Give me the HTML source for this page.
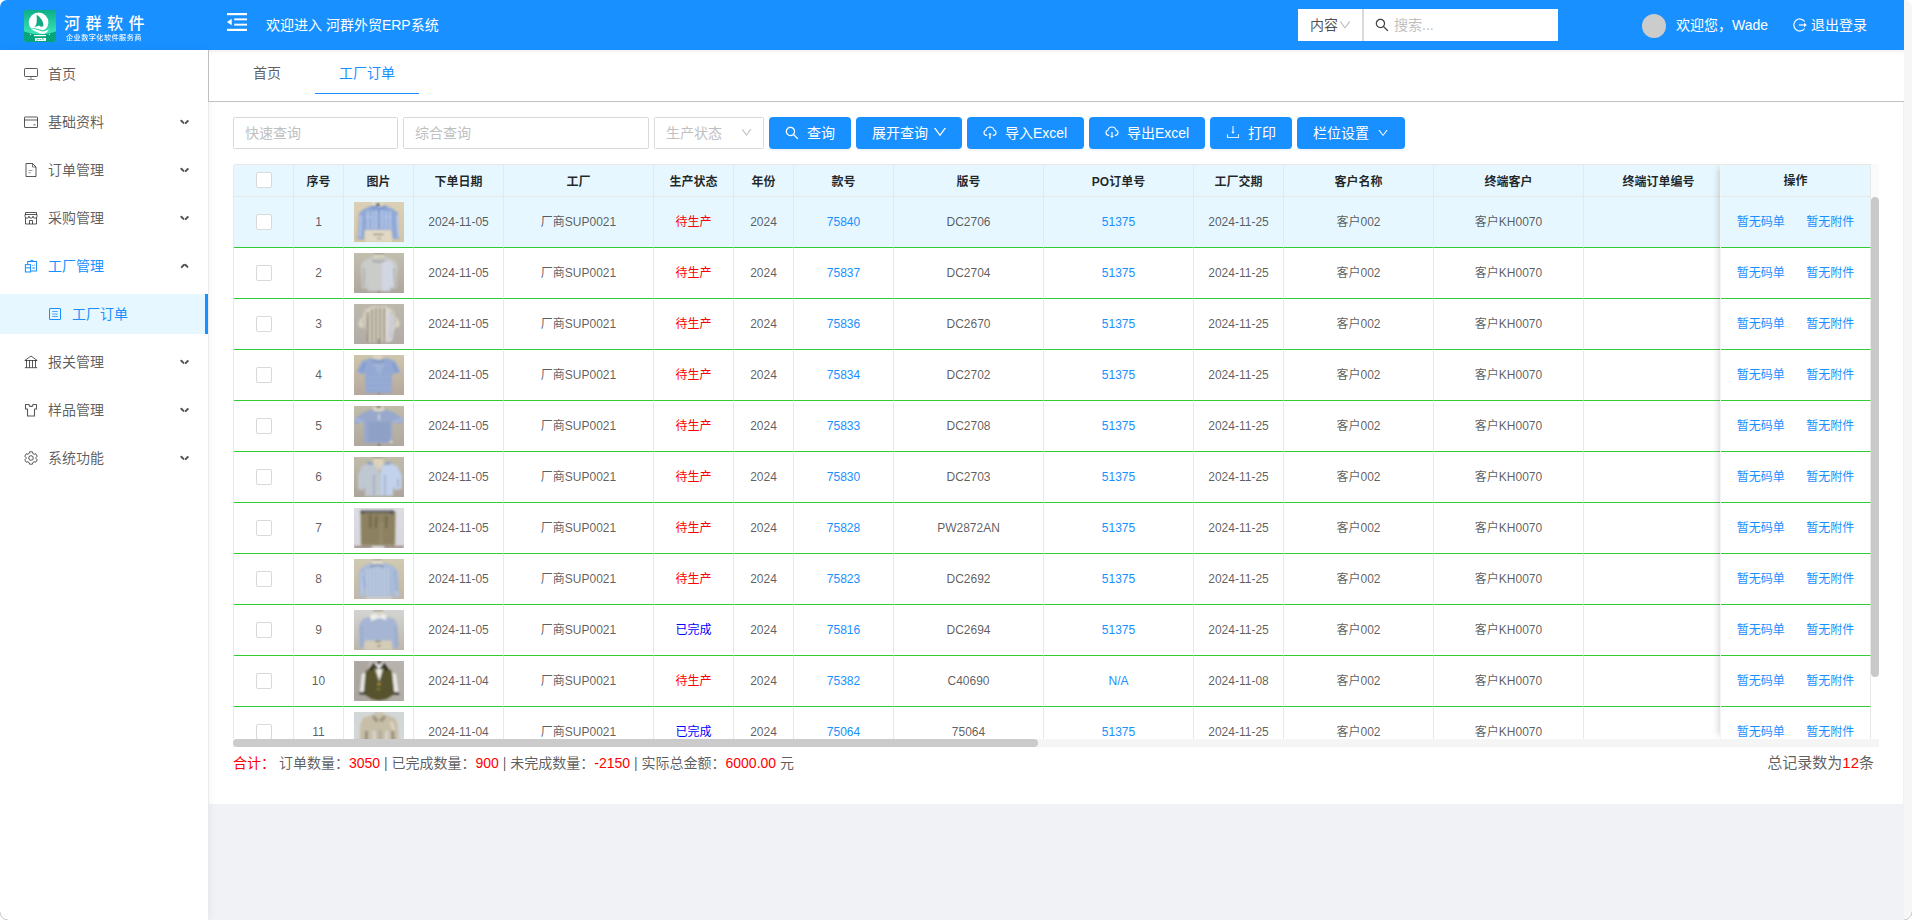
<!DOCTYPE html>
<html lang="zh-CN">
<head>
<meta charset="utf-8">
<title>河群外贸ERP系统</title>
<style>
*{box-sizing:border-box}
html,body{margin:0;padding:0}
html{overflow:hidden;background:#f0f2f5}
body{width:1912px;height:920px;overflow:hidden;background:#f0f2f5;position:relative;font-family:"Liberation Sans","Noto Sans CJK SC",sans-serif;font-size:14px;color:rgba(0,0,0,.65)}
.abs{position:absolute}
#vsb{position:absolute;left:1904px;top:0;width:8px;height:920px;background:#f6f6f6;border-radius:0 8px 0 0}
#cw{position:absolute;left:0;top:0;width:1912px;height:12px;background:#fff}
#hdr{position:absolute;left:0;top:0;width:1904px;height:50px;background:#1890ff;color:#fff;border-radius:7px 0 0 0}
#side{position:absolute;left:0;top:50px;width:208px;height:870px;background:#fff;box-shadow:2px 0 8px 0 rgba(29,35,41,.05);z-index:3}
#tabs{position:absolute;left:208px;top:50px;width:1696px;height:52px;background:#fff;border-left:1px solid #c0c0c0;border-bottom:1px solid #c0c0c0;z-index:5;box-shadow:inset 0 4px 4px -3px rgba(0,21,41,.09)}
#card{position:absolute;left:209px;top:102px;width:1694px;height:702px;background:#fff;border-radius:0 0 2px 2px}
.logo-t{position:absolute;left:64px;top:13px;font-size:16px;font-weight:500;letter-spacing:5.500px;line-height:22px;white-space:nowrap;color:#fff}
.logo-s{position:absolute;left:66px;top:33px;font-size:7.200px;line-height:10px;white-space:nowrap;color:#fff;letter-spacing:.4px;font-weight:500;opacity:.92}
.wel{position:absolute;left:266px;top:15px;line-height:20px;font-size:14px;white-space:nowrap}
.sbox{position:absolute;left:1298px;top:9px;width:260px;height:32px;background:#fff;border-radius:0}
.sbox .sel{position:absolute;left:0;top:0;width:66px;height:32px;border-right:2px solid #d9d9d9;color:rgba(0,0,0,.7)}
.sbox .sel span{position:absolute;left:12px;top:6px;line-height:20px}
.sbox .ph{position:absolute;left:96px;top:6px;line-height:20px;color:#bfbfbf}
.avatar{position:absolute;left:1642px;top:14px;width:24px;height:24px;border-radius:50%;background:#ccc}
.uname{position:absolute;left:1676px;top:15px;line-height:20px;white-space:nowrap}
.logout{position:absolute;left:1811px;top:15px;line-height:20px;white-space:nowrap}
.mi{position:absolute;left:0;width:208px;height:40px;line-height:40px;color:rgba(0,0,0,.65)}
.mi .ic{position:absolute;top:13px;width:14px;height:14px;line-height:0}
.mi .mt{position:absolute;top:0;white-space:nowrap}
.mi.act{color:#1890ff}
.mi.sub{background:#e6f7ff;color:#1890ff;border-right:3px solid #1890ff}
.arr{position:absolute;left:180.300px;top:15px;width:9px;height:9px}
.arr:before,.arr:after{content:"";position:absolute;top:4px;width:5.400px;height:1.500px;background:rgba(0,0,0,.68);border-radius:1px}
.arr:before{left:0;transform:rotate(45deg)}
.arr:after{left:3.400px;transform:rotate(-45deg)}
.arr.up:before{transform:rotate(-45deg)}
.arr.up:after{transform:rotate(45deg)}
.tab{position:absolute;top:13px;line-height:20px;white-space:nowrap;color:rgba(0,0,0,.65)}
.inp{position:absolute;top:117px;height:32px;border:1px solid #d9d9d9;border-radius:1.500px;background:#fff;color:#bfbfbf;line-height:30px;padding-left:11px;white-space:nowrap}
.btn{position:absolute;top:117px;height:32px;background:#1890ff;border-radius:4px;color:#fff;box-shadow:0 2px 0 rgba(0,0,0,.045);white-space:nowrap}
.btn span{position:absolute;top:6px;line-height:20px}
.btn svg{position:absolute;top:9px}
#tbl{position:absolute;left:233px;top:164px;width:1638px;height:575px;overflow:hidden;border-left:1px solid #e8e8e8;border-top:1px solid #e8e8e8;border-radius:3px 0 0 0}
table{border-collapse:separate;border-spacing:0;table-layout:fixed;font-size:12px}
th,td{padding:0;text-align:center;border-right:1px solid #e8e8e8;white-space:nowrap;overflow:hidden}
th{height:32px;background:#e6f7ff;color:rgba(0,0,0,.85);font-weight:bold;border-bottom:1px solid #e8e8e8;line-height:31px}
td{height:51px;border-bottom:1px solid limegreen;line-height:50px;color:rgba(0,0,0,.65)}
tr.hl td{background:#e6f7ff}
td a{color:#1890ff}
.cb{display:inline-block;width:16px;height:16px;border:1px solid #d9d9d9;border-radius:2px;background:#fff;vertical-align:middle;position:relative;top:-1px}
td.im{line-height:0}
.th{display:block;margin:0 auto}
#fix{position:absolute;left:1720px;top:164px;width:151px;height:575px;overflow:hidden;background:#fff;box-shadow:-6px 0 6px -4px rgba(0,0,0,.15);border-left:1px solid #f4f4f4;border-top:1px solid #e8e8e8;border-radius:0 4px 0 0}
#fix th{line-height:29px;border-radius:0 4px 0 0}
.ht{position:relative;top:1.500px}
#fix .ht{top:1px}
#fix .l2{margin-left:21.500px}
#vs{position:absolute;left:1871px;top:164px;width:8px;height:33px;background:#fafafa}
#vthumb{position:absolute;left:1871px;top:197px;width:8px;height:480px;background:#c9c9c9;border-radius:4px}
#hs{position:absolute;left:233px;top:739px;width:1646px;height:8px;background:#f5f5f5}
#hthumb{position:absolute;left:233px;top:739px;width:805px;height:8px;background:#cbcbcb;border-radius:4px}
.sum{position:absolute;left:233px;top:753px;line-height:20px;white-space:pre;font-size:14px}
.sum b{font-weight:normal;color:red}
.tot{position:absolute;right:38px;top:752px;line-height:22px;white-space:nowrap;font-size:15px}
.tot b{font-weight:normal;color:red}
</style>
</head>
<body>
<div id="cw"></div>
<div id="vsb"></div>
<div id="hdr">
  <svg class="abs" style="left:24px;top:10px" width="32" height="32" viewBox="0 0 32 32">
    <defs><linearGradient id="lg" x1="0" y1="0" x2="0" y2="1"><stop offset="0" stop-color="#0cae86"/><stop offset=".72" stop-color="#3ae2b4"/><stop offset="1" stop-color="#2fd6a8"/></linearGradient><clipPath id="lc"><rect width="32" height="32" rx="2"/></clipPath></defs>
    <g clip-path="url(#lc)"><rect width="32" height="32" fill="url(#lg)"/>
    <path d="M0 21.500Q16 27.500 32 21.500V32H0z" fill="#06a47d"/>
    <circle cx="14.600" cy="12.400" r="9.800" fill="#fff"/>
    <path d="M12.600 4.800C12.900 9 12.800 12.500 12.300 14.200 11.600 15.800 10.600 16.800 9.200 17.600L15 15.600l1.800 1.200 2.600-.6C19.600 11.800 17 7.600 12.600 4.800z" fill="#10a983"/>
    <path d="M5 19.800C10 17.600 13 19.200 15.500 20.200 19 21.600 22 20.800 25.600 17.600" fill="none" stroke="#2fd5a8" stroke-width="1.300"/>
    <path d="M6.900 19.500C10 18.700 13 19.700 15.500 20.700 19 22.100 22 21.300 24.900 19 23.600 22.200 21 24 18.300 24 14.500 24 12.500 20.500 6.900 19.500z" fill="#fff"/>
    <rect x="10" y="25" width="12" height="1.200" fill="#fff"/><rect x="11" y="28" width="11" height="3" fill="#fff"/><path d="M12.500 28.600l2 .9-2 .9M15.500 29.500h2M18.500 28v1.200h1.500" stroke="#06a47d" stroke-width=".6" fill="none"/>
    <circle cx="6.500" cy="24.500" r=".6" fill="#fff"/><circle cx="25.500" cy="24.500" r=".6" fill="#fff"/></g>
  </svg>
  <div class="logo-t">河群软件</div>
  <div class="logo-s">企业数字化软件服务商</div>
  <svg class="abs" style="left:227px;top:13px" width="20" height="18" viewBox="0 0 20 18" fill="#fff"><rect x="0" y="0" width="20" height="2.200"/><rect x="7.200" y="5.400" width="12.800" height="1.900"/><rect x="7.200" y="10.700" width="12.800" height="1.900"/><rect x="0" y="15.800" width="20" height="2.200"/><path d="M0 9l4.700-3.300v6.600z"/></svg>
  <div class="wel">欢迎进入 河群外贸ERP系统</div>
  <div class="sbox">
    <div class="sel"><span>内容</span><svg viewBox="0 0 1024 1024" width="14" height="14" fill="#bfbfbf" style="position:absolute;left:40px;top:8.500px"><path d="M884 256h-75c-5.100 0-9.900 2.500-12.900 6.600L512 654.200 227.900 262.600c-3-4.100-7.800-6.600-12.900-6.600h-75c-6.500 0-10.300 7.400-6.500 12.700l352.600 486.100c12.800 17.600 39 17.600 51.700 0l352.600-486.100c3.900-5.300.1-12.700-6.400-12.700z"/></svg></div>
    <svg viewBox="0 0 1024 1024" width="16" height="16" fill="#444" style="position:absolute;left:76px;top:8px"><path d="M909.6 854.5L649.9 594.8C690.2 542.7 712 479 712 412c0-80.2-31.3-155.4-87.9-212.1-56.600-56.700-132-87.900-212.100-87.900s-155.500 31.300-212.100 87.900C143.200 256.500 112 331.800 112 412c0 80.100 31.300 155.500 87.900 212.100C256.500 680.800 331.800 712 412 712c67 0 130.600-21.800 182.700-62l259.700 259.600a8.200 8.200 0 0 0 11.600 0l43.600-43.500a8.200 8.200 0 0 0 0-11.600zM570.400 570.400C528 612.700 471.800 636 412 636s-116-23.300-158.400-65.600C211.300 528 188 471.800 188 412s23.300-116.100 65.600-158.400C296 211.300 352.200 188 412 188s116.100 23.200 158.400 65.600S636 352.200 636 412s-23.300 116.100-65.600 158.400z"/></svg>
    <div class="ph">搜索...</div>
  </div>
  <div class="avatar"></div>
  <div class="uname">欢迎您，Wade</div>
  <svg class="abs" style="left:1793px;top:18px" width="14" height="14" viewBox="0 0 14 14" fill="none" stroke="#fff" stroke-width="1.100"><path d="M11.700 3.500A6 6 0 1 0 11.700 10.500" stroke-width="1.250" opacity=".92"/><path d="M5.900 7h5.500" stroke-width="1.900" opacity=".62"/><path d="M11 4.800L13.800 7 11 9.200z" fill="#fff" stroke="none" opacity=".95"/></svg>
  <div class="logout">退出登录</div>
</div>
<div id="side">
</div>
<div style="position:absolute;left:0;top:0;z-index:4">
<div class="mi" style="top:54px"><span class="ic" style="left:24px"><svg width="14" height="14" viewBox="0 0 14 14" fill="none" stroke="currentColor" stroke-width="1"><rect x=".5" y="1.500" width="13" height="8" rx=".8"/><path d="M7 10v2" stroke-width="1.400" opacity=".55"/><path d="M3.500 12.500h7" opacity=".7"/></svg></span><span class="mt" style="left:48px">首页</span></div>
<div class="mi" style="top:102px"><span class="ic" style="left:24px"><svg width="14" height="14" viewBox="0 0 14 14" fill="none" stroke="currentColor" stroke-width="1"><rect x=".5" y="2" width="13" height="10.500" rx=".5"/><path d="M.5 5h13"/><path d="M9.500 9.800h2" /></svg></span><span class="mt" style="left:48px">基础资料</span><span class="arr"></span></div>
<div class="mi" style="top:150px"><span class="ic" style="left:24px"><svg width="14" height="14" viewBox="0 0 14 14" fill="none" stroke="currentColor" stroke-width="1"><path d="M2 .5h6.500L12 4v9.500H2z"/><path d="M8.500 .5V4H12" opacity=".8"/><path d="M4.500 7.500h4M4.500 9.800h2.500" opacity=".6"/></svg></span><span class="mt" style="left:48px">订单管理</span><span class="arr"></span></div>
<div class="mi" style="top:198px"><span class="ic" style="left:24px"><svg width="14" height="14" viewBox="0 0 14 14" fill="none" stroke="currentColor" stroke-width="1"><path d="M1.500 6.800V13h11V6.800"/><path d="M1.500 3.500V1.500h11v2"/><path d="M1 3.500h12v1.700a2 2 0 0 1-4 0 2 2 0 0 1-4 0 2 2 0 0 1-4 0z"/><path d="M5.500 13V9.500h3V13"/></svg></span><span class="mt" style="left:48px">采购管理</span><span class="arr"></span></div>
<div class="mi act" style="top:246px"><span class="ic" style="left:24px"><svg width="14" height="14" viewBox="-.5 -.6 15.200 15.200" fill="none" stroke="currentColor" stroke-width="1.100"><path d="M3.500 5V2h9.500v10.500H7"/><path d="M6.500 2.200a1.500 1.500 0 0 1 3 0" /><rect x="1" y="5.500" width="5.500" height="8"/><path d="M1 9h5.500"/><path d="M8.500 9.800a1.500 1.500 0 0 1 3 0z" fill="currentColor" stroke="none"/><circle cx="9" cy="6.500" r=".6" fill="currentColor" stroke="none"/><path d="M11 5l.6 1.500h-1.200z" fill="currentColor" stroke="none"/></svg></span><span class="mt" style="left:48px">工厂管理</span><span class="arr up"></span></div>
<div class="mi sub" style="top:294px"><span class="ic" style="left:48px"><svg width="14" height="14" viewBox="0 0 14 14" fill="none" stroke="currentColor" stroke-width="1"><rect x="1.500" y="1.500" width="11" height="11" rx=".3"/><path d="M4.200 4.500h5.600M4.200 7h5.600M4.200 9.500h5.600" stroke-width="1" opacity=".75"/></svg></span><span class="mt" style="left:72px">工厂订单</span></div>
<div class="mi" style="top:342px"><span class="ic" style="left:24px"><svg width="14" height="14" viewBox="0 0 14 14" fill="none" stroke="currentColor" stroke-width="1"><path d="M7 1L.8 5.500h12.400z" stroke-linejoin="round"/><path d="M2.500 5.500v7M5.500 5.500v7M8.500 5.500v7M11.500 5.500v7"/><path d="M.8 12.700h12.400"/></svg></span><span class="mt" style="left:48px">报关管理</span><span class="arr"></span></div>
<div class="mi" style="top:390px"><span class="ic" style="left:24px"><svg width="14" height="14" viewBox="0 0 14 14" fill="none" stroke="currentColor" stroke-width="1.100"><path d="M1.500 1.500h3.500a2 2 0 0 0 4 0h3.500V6h-2v7H3.500V6h-2z" stroke-linejoin="round"/></svg></span><span class="mt" style="left:48px">样品管理</span><span class="arr"></span></div>
<div class="mi" style="top:438px"><span class="ic" style="left:24px"><svg width="14" height="14" viewBox="0 0 14 14" fill="none" stroke="currentColor" stroke-width="1"><path d="M5.600 .8h2.800l.5 1.700 1.200.7 1.700-.4 1.400 2.400-1.200 1.300v1l1.200 1.300-1.400 2.400-1.700-.4-1.200.7-.5 1.700H5.600l-.5-1.700-1.200-.7-1.700.4L.8 8.800 2 7.500v-1L.8 5.200l1.400-2.400 1.700.4 1.200-.7z" stroke-linejoin="round"/><circle cx="7" cy="7" r="2.300"/></svg></span><span class="mt" style="left:48px">系统功能</span><span class="arr"></span></div>
</div>
<div id="tabs">
  <div class="tab" style="left:44px">首页</div>
  <div class="tab" style="left:130px;color:#1890ff">工厂订单</div>
  <div class="abs" style="left:106px;top:42.500px;width:104px;height:1.500px;background:#1890ff"></div>
</div>
<div id="card"></div>
<div class="inp" style="left:233px;width:165px">快速查询</div>
<div class="inp" style="left:403px;width:246px">综合查询</div>
<div class="inp" style="left:654px;width:110px">生产状态<svg viewBox="0 0 1024 1024" width="13" height="13" fill="#bfbfbf" style="position:absolute;left:84.500px;top:7.800px"><path d="M884 256h-75c-5.100 0-9.900 2.500-12.900 6.600L512 654.200 227.900 262.600c-3-4.100-7.800-6.600-12.900-6.600h-75c-6.500 0-10.300 7.400-6.500 12.700l352.600 486.100c12.800 17.600 39 17.600 51.700 0l352.600-486.100c3.900-5.300.1-12.700-6.400-12.700z"/></svg></div>
<div class="btn" style="left:769px;width:82px"><svg viewBox="0 0 1024 1024" width="16" height="16" fill="#fff" style="left:15px;top:7.500px"><path d="M909.6 854.5L649.9 594.8C690.2 542.7 712 479 712 412c0-80.2-31.3-155.4-87.9-212.1-56.600-56.700-132-87.900-212.100-87.900s-155.500 31.300-212.100 87.900C143.200 256.500 112 331.800 112 412c0 80.100 31.300 155.500 87.900 212.100C256.500 680.800 331.800 712 412 712c67 0 130.600-21.800 182.700-62l259.700 259.600a8.200 8.200 0 0 0 11.600 0l43.600-43.500a8.200 8.200 0 0 0 0-11.600zM570.400 570.400C528 612.700 471.800 636 412 636s-116-23.300-158.400-65.600C211.300 528 188 471.800 188 412s23.300-116.100 65.600-158.400C296 211.300 352.200 188 412 188s116.100 23.200 158.400 65.600S636 352.200 636 412s-23.300 116.100-65.600 158.400z"/></svg><span style="left:38px">查询</span></div>
<div class="btn" style="left:856px;width:106px"><span style="left:16px">展开查询</span><svg viewBox="0 0 1024 1024" width="16" height="16" fill="#fff" style="left:75.500px;top:7px"><path d="M884 256h-75c-5.100 0-9.900 2.500-12.900 6.600L512 654.200 227.900 262.600c-3-4.100-7.800-6.600-12.900-6.600h-75c-6.500 0-10.300 7.400-6.500 12.700l352.600 486.100c12.800 17.600 39 17.600 51.700 0l352.600-486.100c3.900-5.300.1-12.700-6.400-12.700z"/></svg></div>
<div class="btn" style="left:967px;width:117px"><svg style="left:16px" width="14" height="14" viewBox="0 0 14 14" fill="none" stroke="#fff" stroke-width="1.100"><path d="M4.200 9.400H3.600a2.600 2.600 0 0 1-.7-5.100 4.200 4.200 0 0 1 8.200 0 2.600 2.600 0 0 1-.7 5.100H9.800" /><path d="M7 13V7.800" stroke-width="1.700" opacity=".75"/><path d="M5.200 8.700L7 6.700l1.800 2z" fill="#fff" stroke="none"/></svg><span style="left:38px">导入Excel</span></div>
<div class="btn" style="left:1089px;width:116px"><svg style="left:16px" width="14" height="14" viewBox="0 0 14 14" fill="none" stroke="#fff" stroke-width="1.100"><path d="M4.200 9.400H3.600a2.600 2.600 0 0 1-.7-5.100 4.200 4.200 0 0 1 8.200 0 2.600 2.600 0 0 1-.7 5.100H9.800" /><path d="M7 5.900V10.300" stroke-width="1.700" opacity=".7"/><path d="M5.200 10L7 12l1.800-2z" fill="#fff" stroke="none"/></svg><span style="left:38px">导出Excel</span></div>
<div class="btn" style="left:1210px;width:82px"><svg style="left:16px;top:8px" width="14" height="14" viewBox="0 0 14 14" fill="none" stroke="#fff" stroke-width="1.100"><path d="M7 1v6" stroke-width="1.600" opacity=".65"/><path d="M5.300 6.800L7 8.700l1.700-1.900z" fill="#fff" stroke="none"/><path d="M1.500 9.200v3.300h11V9.200" opacity=".85"/></svg><span style="left:38px">打印</span></div>
<div class="btn" style="left:1297px;width:108px"><span style="left:16px">栏位设置</span><svg viewBox="0 0 1024 1024" width="12" height="12" fill="#fff" style="left:80px;top:10px"><path d="M884 256h-75c-5.100 0-9.900 2.500-12.900 6.600L512 654.200 227.900 262.600c-3-4.100-7.800-6.600-12.900-6.600h-75c-6.500 0-10.300 7.400-6.500 12.700l352.600 486.100c12.800 17.600 39 17.600 51.700 0l352.600-486.100c3.900-5.300.1-12.700-6.400-12.700z"/></svg></div>
<svg width="0" height="0" style="position:absolute"><defs><filter id="bl" x="-10%" y="-10%" width="120%" height="120%"><feGaussianBlur stdDeviation=".8"/></filter></defs></svg>
<div id="tbl">
<table style="width:1650px"><colgroup><col style="width:60px"><col style="width:50px"><col style="width:70px"><col style="width:90px"><col style="width:150px"><col style="width:80px"><col style="width:60px"><col style="width:100px"><col style="width:150px"><col style="width:150px"><col style="width:90px"><col style="width:150px"><col style="width:150px"><col style="width:150px"><col style="width:150px"></colgroup>
<thead><tr><th><span class="cb"></span></th><th><span class="ht">序号</span></th><th><span class="ht">图片</span></th><th><span class="ht">下单日期</span></th><th><span class="ht">工厂</span></th><th><span class="ht">生产状态</span></th><th><span class="ht">年份</span></th><th><span class="ht">款号</span></th><th><span class="ht">版号</span></th><th><span class="ht">PO订单号</span></th><th><span class="ht">工厂交期</span></th><th><span class="ht">客户名称</span></th><th><span class="ht">终端客户</span></th><th><span class="ht">终端订单编号</span></th><th><span class="ht"></span></th></tr></thead>
<tbody>
<tr class="hl"><td><span class="cb"></span></td><td>1</td><td class="im"><svg class="th" width="50" height="40" viewBox="0 0 50 40"><defs><linearGradient id="tg1" x1="0" y1="0" x2="0" y2="1"><stop offset="0" stop-color="#dbd0b6"/><stop offset="1" stop-color="#d3c5a6"/></linearGradient><clipPath id="tc1"><rect width="50" height="40"/></clipPath></defs><rect width="50" height="40" fill="url(#tg1)"/><g clip-path="url(#tc1)"><g filter="url(#bl)"><path d="M18.500 0h9.500l1 6h-11.500z" fill="#e9e2cf"/><rect x="22" y="1.500" width="4" height="2.500" fill="#3a3a3a"/><path d="M11 27h27v13H11z" fill="#e2d9c4"/><path d="M19.500 32.500h10M23.500 36.500h3.500" stroke="#4a4a48" stroke-width="1.100"/><path d="M17 4l-7 3-5 4-1.500 26 6.500.5 1-13v3.500h26V24l1.500 13 7-.5L44 11l-5-4-7-3-7 2z" fill="#90a8d5"/><path d="M14 9v18M18.500 9v18M22 8v19M28 8v19M32 9v18M36 9v18M7 13l-1 22M43 13l1.500 22" stroke="#c9d8f0" stroke-width="1.500" fill="none" opacity=".85"/><path d="M11 14h8v2H11zM30 14h8v2h-8z" fill="#aec3e8" opacity=".8"/><path d="M16 6.500l9 2.500 8-2.500-2-3.500-6 2-6-2z" fill="#7f9bd0"/></g></g></svg></td><td>2024-11-05</td><td>厂商SUP0021</td><td style="color:red">待生产</td><td>2024</td><td><a>75840</a></td><td>DC2706</td><td><a>51375</a></td><td>2024-11-25</td><td>客户002</td><td>客户KH0070</td><td></td><td></td></tr>
<tr><td><span class="cb"></span></td><td>2</td><td class="im"><svg class="th" width="50" height="40" viewBox="0 0 50 40"><defs><linearGradient id="tg2" x1="0" y1="0" x2="0" y2="1"><stop offset="0" stop-color="#c2bfae"/><stop offset="1" stop-color="#aea79f"/></linearGradient><clipPath id="tc2"><rect width="50" height="40"/></clipPath></defs><rect width="50" height="40" fill="url(#tg2)"/><g clip-path="url(#tc2)"><g filter="url(#bl)"><path d="M20 0h10l.5 5h-11z" fill="#d9d2c2"/><rect x="20" y="0" width="10" height="1" fill="#4a4640"/><path d="M18 4l-9 4-2 6 1 21 5 .5.500-9V38h23V26.500l1 9 5-.5 1-21-2-6-9-4-7 2.500z" fill="#c9ccc9"/><path d="M28 8h9l3 6 0 20-4 1V38H28z" fill="#d3d7e6" opacity=".85"/><path d="M10 15v19M40 15l1 19" stroke="#a9aaa8" stroke-width="2" opacity=".7"/><path d="M18 7.500l7 1.500 6-1.500" stroke="#7e7f80" stroke-width="1" fill="none"/><rect x="24.300" y="38" width="1.400" height="2" fill="#6a5548"/></g></g></svg></td><td>2024-11-05</td><td>厂商SUP0021</td><td style="color:red">待生产</td><td>2024</td><td><a>75837</a></td><td>DC2704</td><td><a>51375</a></td><td>2024-11-25</td><td>客户002</td><td>客户KH0070</td><td></td><td></td></tr>
<tr><td><span class="cb"></span></td><td>3</td><td class="im"><svg class="th" width="50" height="40" viewBox="0 0 50 40"><defs><linearGradient id="tg3" x1="0" y1="0" x2="0" y2="1"><stop offset="0" stop-color="#bdb9ad"/><stop offset="1" stop-color="#b1aba5"/></linearGradient><clipPath id="tc3"><rect width="50" height="40"/></clipPath></defs><rect width="50" height="40" fill="url(#tg3)"/><g clip-path="url(#tc3)"><g filter="url(#bl)"><path d="M19 2l-8 4-7 13 1 4 6 1 1-3 2 17h22l2-17 1 3 6-1 1-4-7-13-8-4-6 1z" fill="#d9d3c2"/><path d="M33 5l6 6 2 8-3 18h-5z" fill="#dcdde6"/><path d="M14 8v30M18 5v33M22 4v34M26 4v34M30 4v34" stroke="#5f5a50" stroke-width="1.300" fill="none" opacity=".8"/><path d="M8 11l2 12M11 8l2 16M42 11l-2 12M39 8l-2 26M36 8l-1 28" stroke="#77736a" stroke-width="1" fill="none" stroke-dasharray="1.500 1.500" opacity=".8"/><rect x="24.300" y="35" width="1.400" height="5" fill="#7a6656"/></g></g></svg></td><td>2024-11-05</td><td>厂商SUP0021</td><td style="color:red">待生产</td><td>2024</td><td><a>75836</a></td><td>DC2670</td><td><a>51375</a></td><td>2024-11-25</td><td>客户002</td><td>客户KH0070</td><td></td><td></td></tr>
<tr><td><span class="cb"></span></td><td>4</td><td class="im"><svg class="th" width="50" height="40" viewBox="0 0 50 40"><defs><linearGradient id="tg4" x1="0" y1="0" x2="0" y2="1"><stop offset="0" stop-color="#cec6ad"/><stop offset="1" stop-color="#b6a89d"/></linearGradient><clipPath id="tc4"><rect width="50" height="40"/></clipPath></defs><rect width="50" height="40" fill="url(#tg4)"/><g clip-path="url(#tc4)"><g filter="url(#bl)"><path d="M18.500 0h9.500l.5 4h-10.500z" fill="#ddd5c2"/><path d="M17 3l-9 3-5.500 11 7 2.500 1.500-2 .5 20.500h26l.5-20.500 1.500 2 7-2.500L41 6l-9-3-7 2z" fill="#93a8d2"/><path d="M11 8l-4 9M39 8l4 9" stroke="#7d98d2" stroke-width="2.500" opacity=".8"/><path d="M19 9l6 12 6-12" fill="#a3b4d6" opacity=".8"/><path d="M13 22h24M13 28h24M13 33h24" stroke="#a9bde3" stroke-width="1" opacity=".6"/><path d="M18 5.500l7 1.500 5-1.500" stroke="#6d86bf" stroke-width="1.200" fill="none"/><rect x="24.300" y="38" width="1.400" height="2" fill="#7a6656"/></g></g></svg></td><td>2024-11-05</td><td>厂商SUP0021</td><td style="color:red">待生产</td><td>2024</td><td><a>75834</a></td><td>DC2702</td><td><a>51375</a></td><td>2024-11-25</td><td>客户002</td><td>客户KH0070</td><td></td><td></td></tr>
<tr><td><span class="cb"></span></td><td>5</td><td class="im"><svg class="th" width="50" height="40" viewBox="0 0 50 40"><defs><linearGradient id="tg5" x1="0" y1="0" x2="0" y2="1"><stop offset="0" stop-color="#c1bda9"/><stop offset="1" stop-color="#b0a89f"/></linearGradient><clipPath id="tc5"><rect width="50" height="40"/></clipPath></defs><rect width="50" height="40" fill="url(#tg5)"/><g clip-path="url(#tc5)"><g filter="url(#bl)"><path d="M19.500 0h10l.5 5h-11z" fill="#e0d9c8"/><rect x="22" y="0" width="5" height="1.500" fill="#3c3c3c"/><path d="M17 3.500l-8 3-9 7 1.500 5 8-2.500.5 2V37h28V18l.5-2 8 2.500 3.500-5-10-7-8-3-7 3z" fill="#98a8cc"/><path d="M14 16h22v20H14z" fill="#8c9cc4" opacity=".7"/><path d="M1 13l8 3M49 13l-9 3" stroke="#a6bce4" stroke-width="2.500" opacity=".8"/><path d="M25 8v6" stroke="#d8dce8" stroke-width="1.500"/><path d="M37 34l2 3h-4z" fill="#e3dccb"/><rect x="24.300" y="37.500" width="1.400" height="2.500" fill="#5a4a40"/></g></g></svg></td><td>2024-11-05</td><td>厂商SUP0021</td><td style="color:red">待生产</td><td>2024</td><td><a>75833</a></td><td>DC2708</td><td><a>51375</a></td><td>2024-11-25</td><td>客户002</td><td>客户KH0070</td><td></td><td></td></tr>
<tr><td><span class="cb"></span></td><td>6</td><td class="im"><svg class="th" width="50" height="40" viewBox="0 0 50 40"><defs><linearGradient id="tg6" x1="0" y1="0" x2="0" y2="1"><stop offset="0" stop-color="#c0bca9"/><stop offset="1" stop-color="#aca49b"/></linearGradient><clipPath id="tc6"><rect width="50" height="40"/></clipPath></defs><rect width="50" height="40" fill="url(#tg6)"/><g clip-path="url(#tc6)"><g filter="url(#bl)"><path d="M19 0h10l1 6-6 9-5-9z" fill="#ddd2ba"/><rect x="19" y="0" width="10" height="1" fill="#55524c"/><path d="M18 5l-10 4-4 9 0 14 5 1.500 2-4V39h28V29.500l2 4 7-1.500 0-14-4-9-10-4-5 8 1 3-3-1-3 1 1-3z" fill="#bfc7d0"/><path d="M27 9l7-3 9 4 4 9v12l-6 1-2-4v10H27z" fill="#c3d2ec"/><path d="M13 6l6 1M31 7l6-1" stroke="#8198c4" stroke-width="1.800"/><path d="M20 18v20M31 18v20M44 22v8" stroke="#98a6bd" stroke-width="1.800" opacity=".7"/></g></g></svg></td><td>2024-11-05</td><td>厂商SUP0021</td><td style="color:red">待生产</td><td>2024</td><td><a>75830</a></td><td>DC2703</td><td><a>51375</a></td><td>2024-11-25</td><td>客户002</td><td>客户KH0070</td><td></td><td></td></tr>
<tr><td><span class="cb"></span></td><td>7</td><td class="im"><svg class="th" width="50" height="40" viewBox="0 0 50 40"><defs><linearGradient id="tg7" x1="0" y1="0" x2="0" y2="1"><stop offset="0" stop-color="#dcdde2"/><stop offset="1" stop-color="#d6d6dc"/></linearGradient><clipPath id="tc7"><rect width="50" height="40"/></clipPath></defs><rect width="50" height="40" fill="url(#tg7)"/><g clip-path="url(#tc7)"><g filter="url(#bl)"><path d="M6.500 3.500h35l-.5 34h-34z" fill="#8c8161"/><path d="M16 6c1 6 0 10 0 14M22 8c1 6-1 8 0 12M32 8c1 5 0 9 0 12" stroke="#6d6348" stroke-width="2.200" fill="none" opacity=".85"/><path d="M27 14v22" stroke="#9a8d6c" stroke-width="3.500" opacity=".8"/><path d="M6.500 2.500h33.500v2.300H6.500z" fill="#55575c"/><rect x="36" y="3.500" width="4" height="2" fill="#44464a"/><rect x="7" y="3.500" width="3" height="2" fill="#44464a"/><rect x="0" y="38.300" width="50" height="1.700" fill="#8b7062"/><rect x="18" y="38.500" width="12" height="1.500" fill="#e8e8ea"/></g></g></svg></td><td>2024-11-05</td><td>厂商SUP0021</td><td style="color:red">待生产</td><td>2024</td><td><a>75828</a></td><td>PW2872AN</td><td><a>51375</a></td><td>2024-11-25</td><td>客户002</td><td>客户KH0070</td><td></td><td></td></tr>
<tr><td><span class="cb"></span></td><td>8</td><td class="im"><svg class="th" width="50" height="40" viewBox="0 0 50 40"><defs><linearGradient id="tg8" x1="0" y1="0" x2="0" y2="1"><stop offset="0" stop-color="#d1cab2"/><stop offset="1" stop-color="#c1b7a7"/></linearGradient><clipPath id="tc8"><rect width="50" height="40"/></clipPath></defs><rect width="50" height="40" fill="url(#tg8)"/><g clip-path="url(#tc8)"><g filter="url(#bl)"><path d="M18.500 0h9.500l.5 5h-10.500z" fill="#e2dccb"/><rect x="18.500" y="0" width="9.500" height="1" fill="#4a4842"/><path d="M12 37.500h26V40H12z" fill="#e4d9c4"/><path d="M17 4l-8 3.500-4 5 0 25.500 4.500.5 2-8v8h26v-8l2 8 5.500-.5L44 12.500l-4-5-8-3.500-7 2z" fill="#a9bbd8"/><path d="M13 10v27M16.500 9v28M20 8v29M23.500 8v29M27 8v29M30.500 8v29M34 9v28M8 14v23M42 14l1 23" stroke="#d3dbe8" stroke-width="1.100" fill="none" opacity=".8"/><path d="M9 17l2 12M41 12l2 20" stroke="#8ea6d3" stroke-width="2" opacity=".7"/><path d="M16 8l9-2.500 5 3" stroke="#5f77a8" stroke-width="1.100" fill="none"/></g></g></svg></td><td>2024-11-05</td><td>厂商SUP0021</td><td style="color:red">待生产</td><td>2024</td><td><a>75823</a></td><td>DC2692</td><td><a>51375</a></td><td>2024-11-25</td><td>客户002</td><td>客户KH0070</td><td></td><td></td></tr>
<tr><td><span class="cb"></span></td><td>9</td><td class="im"><svg class="th" width="50" height="40" viewBox="0 0 50 40"><defs><linearGradient id="tg9" x1="0" y1="0" x2="0" y2="1"><stop offset="0" stop-color="#d3d4d2"/><stop offset="1" stop-color="#bcb6ac"/></linearGradient><clipPath id="tc9"><rect width="50" height="40"/></clipPath></defs><rect width="50" height="40" fill="url(#tg9)"/><g clip-path="url(#tc9)"><g filter="url(#bl)"><path d="M20 0h9l.5 5h-10z" fill="#ddd6c6"/><rect x="19.500" y="0" width="9.500" height="1" fill="#4c4a46"/><path d="M10 30h28v10H10z" fill="#d5ccb7"/><path d="M21 31.500h6M23.500 36h3" stroke="#4a4845" stroke-width="1.100"/><path d="M16 7l-7 2-3.500 5 0 24 4 0 1.500-9v1.500h26V29l2 9 5 0L43 14l-3-5-7-2z" fill="#a5b5d3"/><path d="M7 16l1 21M42 16l1 21" stroke="#8fa4cc" stroke-width="2" opacity=".7"/><path d="M16 5l5-1 4 2.500 4-2.500 3 1 .5 5-7.500-2-8 3z" fill="#f0efea"/></g></g></svg></td><td>2024-11-05</td><td>厂商SUP0021</td><td style="color:blue">已完成</td><td>2024</td><td><a>75816</a></td><td>DC2694</td><td><a>51375</a></td><td>2024-11-25</td><td>客户002</td><td>客户KH0070</td><td></td><td></td></tr>
<tr><td><span class="cb"></span></td><td>10</td><td class="im"><svg class="th" width="50" height="40" viewBox="0 0 50 40"><defs><linearGradient id="tg10" x1="0" y1="0" x2="0" y2="1"><stop offset="0" stop-color="#b7b3ad"/><stop offset="1" stop-color="#b1aca6"/></linearGradient><clipPath id="tc10"><rect width="50" height="40"/></clipPath></defs><rect width="50" height="40" fill="url(#tg10)"/><g clip-path="url(#tc10)"><g filter="url(#bl)"><rect width="14" height="40" fill="#a39e98" opacity=".55"/><path d="M13 11l-5 2-2 19 4.500 1.500 4.500-2z" fill="#ecebe5"/><path d="M37 11l5 2 2.500 19-4.500 1.500-4.500-2z" fill="#ecebe5"/><path d="M21 3h7.500l2 6-5.700 13-5.800-13z" fill="#efeee8"/><path d="M11.500 10.500l8-6.500 5.300 18 5.200-18 8 6.500 2.500 22.500-8 5-7.500 1.500-7.500-1.500-8-5z" fill="#56532d"/><path d="M17 9l3-5 3.500 4M33 9l-3-5-3.500 4" stroke="#161616" stroke-width="2.400" fill="none"/><path d="M20 6l5 15" stroke="#6a673c" stroke-width="1.500"/><rect x="5.500" y="31" width="5.500" height="2.400" fill="#1b1b1b"/><rect x="39.500" y="31" width="5.500" height="2.400" fill="#1b1b1b"/><rect x="23.500" y="22.500" width="3" height="1.600" fill="#c9a94a"/><rect x="23.500" y="27.500" width="2" height="1.500" fill="#b59a45"/><rect x="23.800" y="0" width="2.600" height="3.500" fill="#2a2a2a"/></g></g></svg></td><td>2024-11-04</td><td>厂商SUP0021</td><td style="color:red">待生产</td><td>2024</td><td><a>75382</a></td><td>C40690</td><td><a>N/A</a></td><td>2024-11-08</td><td>客户002</td><td>客户KH0070</td><td></td><td></td></tr>
<tr><td><span class="cb"></span></td><td>11</td><td class="im"><svg class="th" width="50" height="40" viewBox="0 0 50 40"><defs><linearGradient id="tg11" x1="0" y1="0" x2="0" y2="1"><stop offset="0" stop-color="#d2d6d6"/><stop offset="1" stop-color="#d5d8d8"/></linearGradient><clipPath id="tc11"><rect width="50" height="40"/></clipPath></defs><rect width="50" height="40" fill="url(#tg11)"/><g clip-path="url(#tc11)"><g filter="url(#bl)"><path d="M21 0h8l1 4h-10z" fill="#c9c2b0"/><path d="M20 2.500l-11 3.500-2.500 6L5 40h40l-1.500-28-2.500-6-11-3.500-5 2z" fill="#c6bea6"/><path d="M20 3l5 5.500 5-5.500 2 2.500-4 5-3-2.500-3 2.500-4-5z" fill="#9d917c"/><path d="M12.500 19l-1 21M38.500 19l1.500 21" stroke="#85796a" stroke-width="2.500" opacity=".8"/><path d="M20 19l1 21M33 19l-1 21" stroke="#d8d6d0" stroke-width="3.500" opacity=".9"/><path d="M26 18v22" stroke="#aaa39a" stroke-width="3" opacity=".7"/><path d="M37 10l3 8" stroke="#e6e2d2" stroke-width="2.500" opacity=".8"/></g></g></svg></td><td>2024-11-04</td><td>厂商SUP0021</td><td style="color:blue">已完成</td><td>2024</td><td><a>75064</a></td><td>75064</td><td><a>51375</a></td><td>2024-11-25</td><td>客户002</td><td>客户KH0070</td><td></td><td></td></tr>
</tbody></table>
</div>
<div id="fix">
<table style="width:150px"><colgroup><col style="width:150px"></colgroup>
<thead><tr><th><span class="ht">操作</span></th></tr></thead>
<tbody>
<tr class="hl"><td><a>暂无码单</a><a class="l2">暂无附件</a></td></tr>
<tr><td><a>暂无码单</a><a class="l2">暂无附件</a></td></tr>
<tr><td><a>暂无码单</a><a class="l2">暂无附件</a></td></tr>
<tr><td><a>暂无码单</a><a class="l2">暂无附件</a></td></tr>
<tr><td><a>暂无码单</a><a class="l2">暂无附件</a></td></tr>
<tr><td><a>暂无码单</a><a class="l2">暂无附件</a></td></tr>
<tr><td><a>暂无码单</a><a class="l2">暂无附件</a></td></tr>
<tr><td><a>暂无码单</a><a class="l2">暂无附件</a></td></tr>
<tr><td><a>暂无码单</a><a class="l2">暂无附件</a></td></tr>
<tr><td><a>暂无码单</a><a class="l2">暂无附件</a></td></tr>
<tr><td><a>暂无码单</a><a class="l2">暂无附件</a></td></tr>
</tbody></table>
</div>
<div id="vs"></div><div id="vthumb"></div>
<div id="hs"></div><div id="hthumb"></div>
<svg class="abs" style="left:0;top:912px;z-index:9" width="8" height="8" viewBox="0 0 8 8"><path d="M0 0A8 8 0 0 0 8 8H0z" fill="#fff"/><path d="M0 0A8 8 0 0 0 8 8" fill="none" stroke="#c9c9c9" stroke-width="1"/></svg><svg class="abs" style="left:1904px;top:912px;z-index:9" width="8" height="8" viewBox="0 0 8 8"><path d="M8 0A8 8 0 0 1 0 8H8z" fill="#fff"/><path d="M8 0A8 8 0 0 1 0 8" fill="none" stroke="#c9c9c9" stroke-width="1"/></svg>
<div class="sum"><b>合计：</b> 订单数量：<b>3050</b> | 已完成数量：<b>900</b> | 未完成数量：<b>-2150</b> | 实际总金额：<b>6000.00</b> 元</div>
<div class="tot">总记录数为<b>12</b>条</div>
</body>
</html>
